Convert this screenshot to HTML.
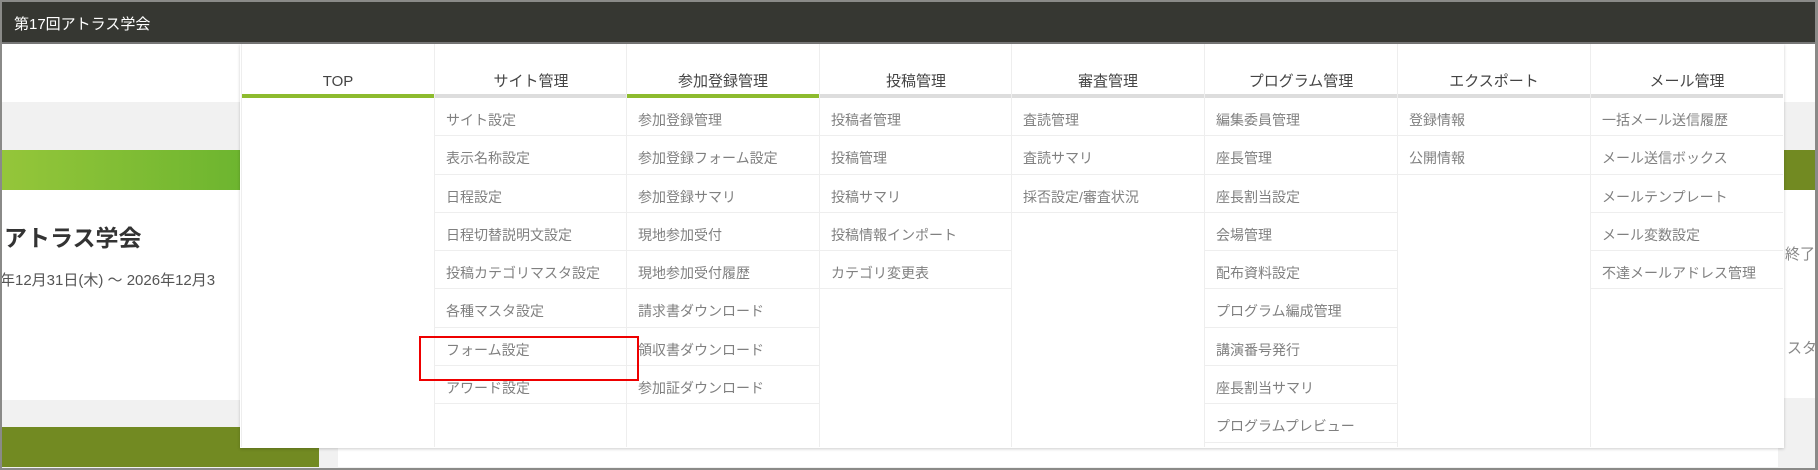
<!DOCTYPE html>
<html><head><meta charset="utf-8"><style>
*{margin:0;padding:0;box-sizing:border-box}
body{width:1818px;height:470px;overflow:hidden;background:#f1f1f1;font-family:"Liberation Sans","Noto Sans CJK JP",sans-serif;position:relative}
.a{position:absolute}
.frame{position:absolute;left:0;top:0;width:1818px;height:470px;border:2px solid #8a8a88;border-right:3px solid #8a8a88;pointer-events:none}
.hdr{left:0;top:0;width:1818px;height:44px;background:#363732;border-bottom:2px solid #777}
.hdr span{position:absolute;left:14px;top:13px;color:#fff;font-size:15px}
.col{position:absolute;top:44px;width:193px;height:403px;background:#fff;border-left:1px solid #eee}
.col .t{height:54px;text-align:center;line-height:76px;font-size:15px;color:#444;border-bottom:4px solid #ddd}
.col .t.g{border-bottom-color:#8dbb2e}
.col .i{height:38.3px;line-height:44px;padding-left:11px;font-size:14px;color:#808080;border-bottom:1px solid #eee;white-space:nowrap}
</style></head><body>
<div class="a" style="left:0;top:44px;width:1818px;height:58px;background:#fff"></div>
<div class="a" style="left:0;top:102px;width:1818px;height:48px;background:#f1f1f1"></div>
<div class="a" style="left:0;top:150px;width:241px;height:40px;background:linear-gradient(90deg,#95c63a,#6db52f)"></div>
<div class="a" style="left:0;top:190px;width:241px;height:210px;background:#fff"></div>
<div class="a" style="left:4px;top:219px;font-size:23px;font-weight:bold;color:#333">アトラス学会</div>
<div class="a" style="left:0;top:269px;font-size:15px;color:#555;white-space:nowrap">年12月31日(木) 〜 2026年12月3</div>
<div class="a" style="left:0;top:427px;width:319px;height:40px;background:#728a22"></div>
<div class="a" style="left:338px;top:447px;width:1440px;height:20px;background:#fff"></div>
<div class="a" style="left:1783px;top:150px;width:35px;height:40px;background:#728a22"></div>
<div class="a" style="left:1783px;top:190px;width:35px;height:208px;background:#fff"></div>
<div class="a" style="left:1785px;top:243px;font-size:15px;color:#888">終了</div>
<div class="a" style="left:1787px;top:337px;font-size:15px;color:#888">スタ</div>

<div class="a hdr"><span>第17回アトラス学会</span></div>

<div class="a" style="left:240px;top:44px;width:1544px;height:404px;box-shadow:0 1px 3px rgba(0,0,0,.2);background:#fff"></div>
<div class="col" style="left:241px"><div class="t g">TOP</div></div>
<div class="col" style="left:434px"><div class="t">サイト管理</div>
<div class="i">サイト設定</div><div class="i">表示名称設定</div><div class="i">日程設定</div><div class="i">日程切替説明文設定</div><div class="i">投稿カテゴリマスタ設定</div><div class="i">各種マスタ設定</div><div class="i">フォーム設定</div><div class="i">アワード設定</div></div>
<div class="col" style="left:626px"><div class="t g">参加登録管理</div>
<div class="i">参加登録管理</div><div class="i">参加登録フォーム設定</div><div class="i">参加登録サマリ</div><div class="i">現地参加受付</div><div class="i">現地参加受付履歴</div><div class="i">請求書ダウンロード</div><div class="i">領収書ダウンロード</div><div class="i">参加証ダウンロード</div></div>
<div class="col" style="left:819px"><div class="t">投稿管理</div>
<div class="i">投稿者管理</div><div class="i">投稿管理</div><div class="i">投稿サマリ</div><div class="i">投稿情報インポート</div><div class="i">カテゴリ変更表</div></div>
<div class="col" style="left:1011px"><div class="t">審査管理</div>
<div class="i">査読管理</div><div class="i">査読サマリ</div><div class="i">採否設定/審査状況</div></div>
<div class="col" style="left:1204px"><div class="t">プログラム管理</div>
<div class="i">編集委員管理</div><div class="i">座長管理</div><div class="i">座長割当設定</div><div class="i">会場管理</div><div class="i">配布資料設定</div><div class="i">プログラム編成管理</div><div class="i">講演番号発行</div><div class="i">座長割当サマリ</div><div class="i">プログラムプレビュー</div></div>
<div class="col" style="left:1397px"><div class="t">エクスポート</div>
<div class="i">登録情報</div><div class="i">公開情報</div></div>
<div class="col" style="left:1590px"><div class="t">メール管理</div>
<div class="i">一括メール送信履歴</div><div class="i">メール送信ボックス</div><div class="i">メールテンプレート</div><div class="i">メール変数設定</div><div class="i">不達メールアドレス管理</div></div>

<div class="a" style="left:419px;top:336px;width:220px;height:45px;border:2px solid #e00"></div>
<div class="frame"></div>
</body></html>
